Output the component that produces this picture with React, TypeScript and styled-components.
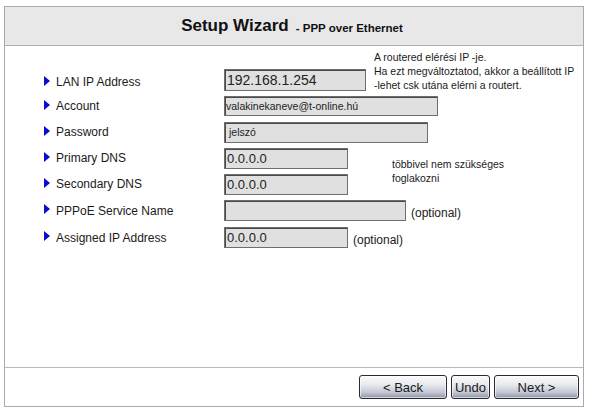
import styled, { createGlobalStyle } from "styled-components";

const GlobalStyle = createGlobalStyle`
  html, body {
    margin: 0;
    padding: 0;
    background: #fff;
    font-family: "Liberation Sans", Arial, sans-serif;
    color: #111;
  }
`;

const Frame = styled.div`
  box-sizing: border-box;
  width: 580px;
  height: 401px;
  margin: 6px 0 0 4px;
  border: 1px solid #aaaaaa;
  display: flex;
  flex-direction: column;
`;

const Header = styled.div`
  height: 38px;
  background: #e8e8e8;
  border-bottom: 1px solid #b0b0b0;
  display: flex;
  align-items: center;
  justify-content: center;
  gap: 7px;
  padding-right: 4px;
`;

const Title = styled.span`
  font-size: 17px;
  font-weight: bold;
  color: #111;
`;

const Subtitle = styled.span`
  font-size: 11.5px;
  font-weight: bold;
  color: #111;
  padding-top: 4px;
`;

const Body = styled.div`
  flex: 1;
  padding: 4px 0 0 38px;
  border-bottom: 1px solid #b8b8b8;
`;

const Form = styled.div`
  display: grid;
  grid-template-columns: 181px 150px 18px 1fr;
  grid-template-rows: 43px repeat(4, 26px) 27px 27px;
  align-items: center;
`;

const Label = styled.div<{ $row: number; $end?: boolean }>`
  grid-column: 1;
  grid-row: ${(p) => p.$row};
  align-self: ${(p) => (p.$end ? "end" : "center")};
  margin-bottom: ${(p) => (p.$end ? "4px" : "0")};
  display: flex;
  align-items: center;
  gap: 6px;
  font-size: 12px;
  color: #1a1a1a;
`;

const Arrow = styled.span`
  width: 0;
  height: 0;
  border-top: 5px solid transparent;
  border-bottom: 5px solid transparent;
  border-left: 6px solid #0a0ad0;
  margin: -3px 0 0 1px;
`;

const Field = styled.div<{ $row: number; $wide?: boolean; $end?: boolean }>`
  grid-column: ${(p) => (p.$wide ? "2 / -1" : "2")};
  grid-row: ${(p) => p.$row};
  align-self: ${(p) => (p.$end ? "end" : "center")};
  margin-bottom: ${(p) => (p.$end ? "2px" : "0")};
  display: flex;
  align-items: center;
  gap: 5px;
`;

const Input = styled.div<{ $w: number; $h?: number; $size?: number; $pad?: number }>`
  box-sizing: border-box;
  width: ${(p) => p.$w}px;
  height: ${(p) => p.$h ?? 21}px;
  background: #e0e0e0;
  border: 1px solid #6e6e6e;
  box-shadow: inset 1px 1px 0 #4a4a4a;
  padding-left: ${(p) => p.$pad ?? 2}px;
  display: flex;
  align-items: center;
  font-size: ${(p) => p.$size ?? 13}px;
  color: #222;
  white-space: nowrap;
`;

const Optional = styled.span`
  font-size: 12px;
  color: #1a1a1a;
  padding-top: 4px;
`;

const Note = styled.div<{ $col: string; $rows: string }>`
  grid-column: ${(p) => p.$col};
  grid-row: ${(p) => p.$rows};
  align-self: ${(p) => (p.$rows === "1" ? "start" : "center")};
  font-size: 10.5px;
  line-height: 14px;
  color: #1a1a1a;
`;

const Footer = styled.div`
  height: 38px;
  display: flex;
  align-items: center;
  justify-content: flex-end;
  gap: 4px;
  padding-right: 4px;
`;

const Button = styled.button<{ $w: number }>`
  box-sizing: border-box;
  width: ${(p) => p.$w}px;
  height: 24px;
  margin: 0;
  padding: 0;
  border: 1px solid #2a2a36;
  border-radius: 3px;
  background: linear-gradient(#fbfbfc, #e8e9ee 40%, #c2c6d2 75%, #8e94a8);
  box-shadow: inset 0 0 0 1px rgba(255, 255, 255, 0.6);
  font-family: "Liberation Sans", Arial, sans-serif;
  font-size: 13px;
  color: #1a1a1a;
`;

const rows = [
  "LAN IP Address",
  "Account",
  "Password",
  "Primary DNS",
  "Secondary DNS",
  "PPPoE Service Name",
  "Assigned IP Address",
];

export default function App() {
  return (
    <>
      <GlobalStyle />
      <Frame>
        <Header>
          <Title>Setup Wizard</Title>
          <Subtitle>- PPP over Ethernet</Subtitle>
        </Header>
        <Body>
          <Form>
            {rows.map((r, i) => (
              <Label key={r} $row={i + 1} $end={i === 0}>
                <Arrow />
                {r}
              </Label>
            ))}

            <Field $row={1} $end>
              <Input $w={142} $h={22} $size={14}>
                192.168.1.254
              </Input>
            </Field>
            <Note $col="3 / -1" $rows="1">
              A routered elérési IP -je.
              <br />
              Ha ezt megváltoztatod, akkor a beállított IP
              <br />
              -lehet csk utána elérni a routert.
            </Note>

            <Field $row={2} $wide>
              <Input $w={214} $h={20} $size={10.5} $pad={1}>
                valakinekaneve@t-online.hú
              </Input>
            </Field>
            <Field $row={3} $wide>
              <Input $w={204} $size={10.5} $pad={4}>
                jelszó
              </Input>
            </Field>
            <Field $row={4}>
              <Input $w={124}>0.0.0.0</Input>
            </Field>
            <Field $row={5}>
              <Input $w={124}>0.0.0.0</Input>
            </Field>
            <Note $col="4" $rows="4 / 6">
              többivel nem szükséges
              <br />
              foglakozni
            </Note>
            <Field $row={6} $wide>
              <Input $w={182} />
              <Optional>(optional)</Optional>
            </Field>
            <Field $row={7} $wide>
              <Input $w={124}>0.0.0.0</Input>
              <Optional>(optional)</Optional>
            </Field>
          </Form>
        </Body>
        <Footer>
          <Button $w={88}>&lt; Back</Button>
          <Button $w={39}>Undo</Button>
          <Button $w={85}>Next &gt;</Button>
        </Footer>
      </Frame>
    </>
  );
}
